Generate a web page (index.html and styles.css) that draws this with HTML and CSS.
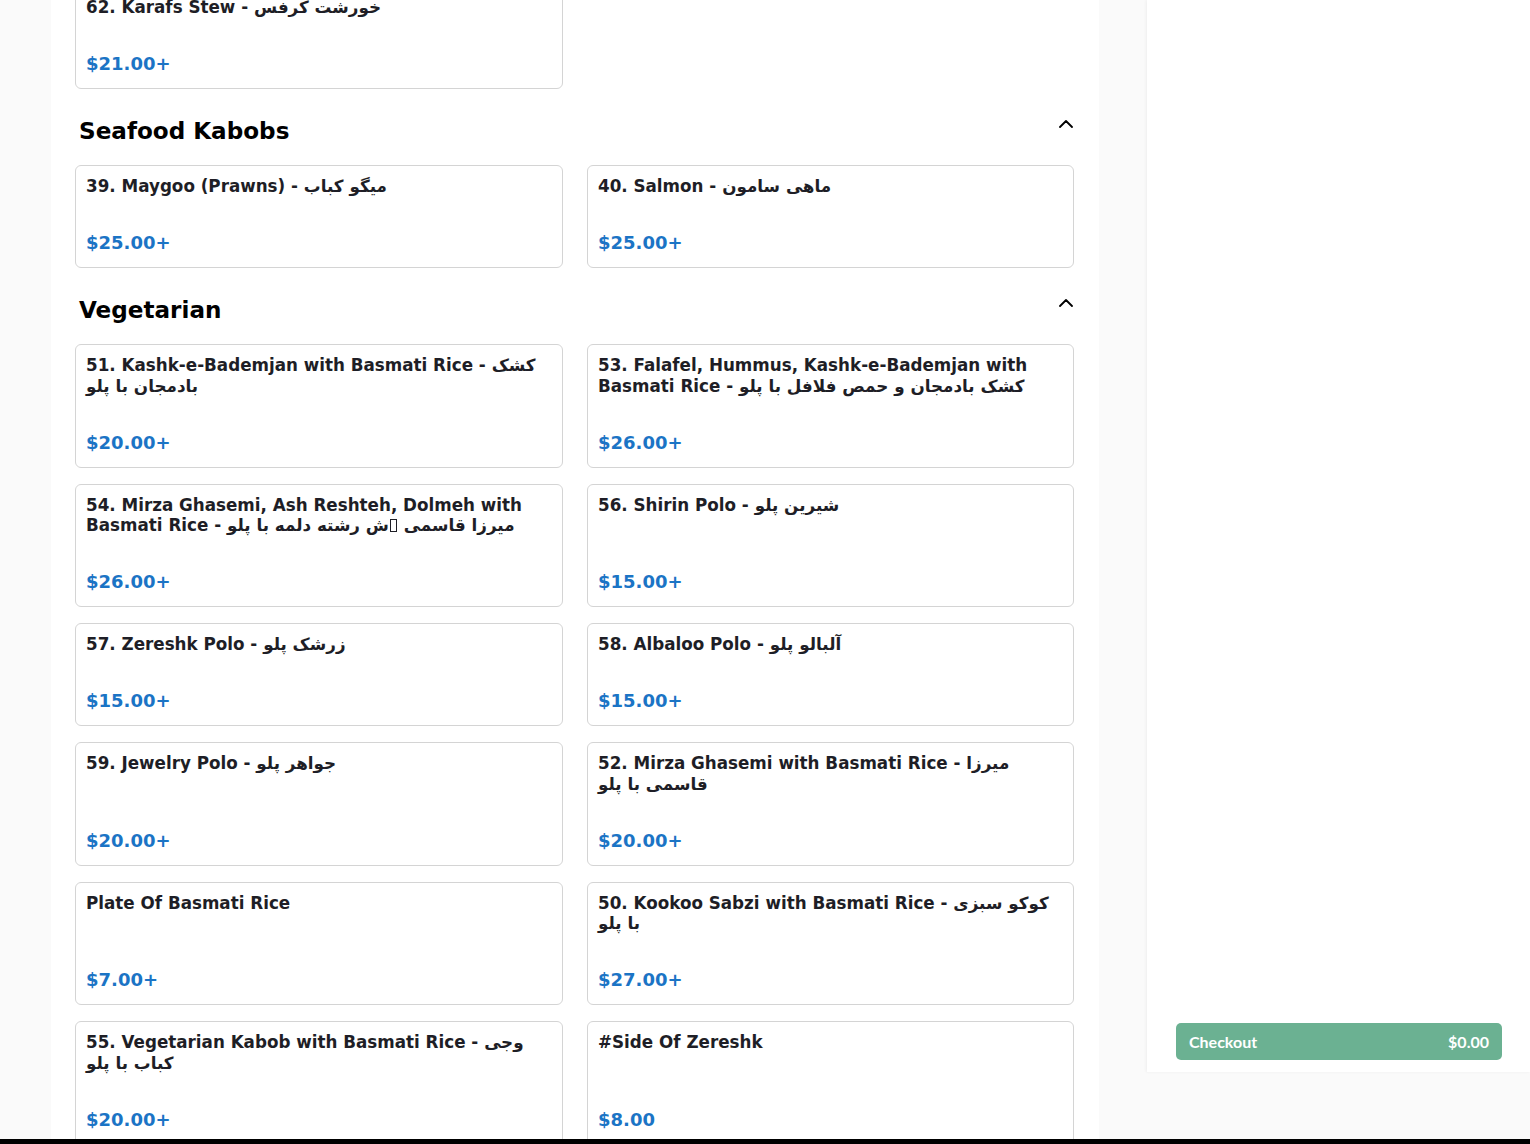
FILE: index.html
```html
<!DOCTYPE html>
<html lang="en">
<head>
<meta charset="utf-8">
<title>Menu</title>
<link rel="stylesheet" href="styles.css">
</head>
<body>
<div class="layout">
  <main class="menu">
    <div class="grid first">
      <div class="card"><div class="title">62. Karafs Stew - خورشت کرفس</div><div class="price">$21.00+</div></div>
    </div>

    <section class="section">
      <div class="section-head">
        <h2>Seafood Kabobs</h2>
        <svg class="chev" width="14" height="8" viewBox="0 0 14 8"><polyline points="1,7 7,1 13,7" fill="none" stroke="#000" stroke-width="1.8" stroke-linecap="round" stroke-linejoin="round"/></svg>
      </div>
      <div class="grid">
        <div class="card"><div class="title">39. Maygoo (Prawns) - میگو کباب</div><div class="price">$25.00+</div></div>
        <div class="card"><div class="title">40. Salmon - ماهی سامون</div><div class="price">$25.00+</div></div>
      </div>
    </section>

    <section class="section">
      <div class="section-head">
        <h2>Vegetarian</h2>
        <svg class="chev" width="14" height="8" viewBox="0 0 14 8"><polyline points="1,7 7,1 13,7" fill="none" stroke="#000" stroke-width="1.8" stroke-linecap="round" stroke-linejoin="round"/></svg>
      </div>
      <div class="grid">
        <div class="card"><div class="title">51. Kashk-e-Bademjan with Basmati Rice - کشک بادمجان با پلو</div><div class="price">$20.00+</div></div>
        <div class="card"><div class="title">53. Falafel, Hummus, Kashk-e-Bademjan with Basmati Rice - کشک بادمجان و حمص فلافل با پلو</div><div class="price">$26.00+</div></div>
        <div class="card"><div class="title">54. Mirza Ghasemi, Ash Reshteh, Dolmeh with Basmati Rice - میرزا قاسمی <span class="tofu"></span>ش رشته دلمه با پلو</div><div class="price">$26.00+</div></div>
        <div class="card"><div class="title">56. Shirin Polo - شیرین پلو</div><div class="price">$15.00+</div></div>
        <div class="card"><div class="title">57. Zereshk Polo - زرشک پلو</div><div class="price">$15.00+</div></div>
        <div class="card"><div class="title">58. Albaloo Polo - آلبالو پلو</div><div class="price">$15.00+</div></div>
        <div class="card"><div class="title">59. Jewelry Polo - جواهر پلو</div><div class="price">$20.00+</div></div>
        <div class="card"><div class="title">52. Mirza Ghasemi with Basmati Rice - میرزا قاسمی با پلو</div><div class="price">$20.00+</div></div>
        <div class="card"><div class="title">Plate Of Basmati Rice</div><div class="price">$7.00+</div></div>
        <div class="card"><div class="title">50. Kookoo Sabzi with Basmati Rice - کوکو سبزی با پلو</div><div class="price">$27.00+</div></div>
        <div class="card"><div class="title">55. Vegetarian Kabob with Basmati Rice - وجی کباب با پلو</div><div class="price">$20.00+</div></div>
        <div class="card"><div class="title">#Side Of Zereshk</div><div class="price">$8.00</div></div>
      </div>
    </section>
  </main>

  <aside class="cart">
    <button class="checkout"><span>Checkout</span><span>$0.00</span></button>
  </aside>
</div>
<div class="bottom-bar"></div>
</body>
</html>
```

FILE: styles.css
```css
html, body {
  margin: 0;
  padding: 0;
  overflow: hidden;
  height: 100%;
}
body {
  background: #fafafa;
  font-family: "DejaVu Sans", sans-serif;
  color: #1e1e26;
}
.layout {
  display: flex;
  align-items: flex-start;
  gap: 48px;
  padding-left: 51px;
}
.menu {
  width: 1048px;
  flex: none;
  background: #fff;
  padding: 0 25px 40px 24px;
  box-sizing: border-box;
  min-height: 1300px;
}
.grid {
  display: grid;
  grid-template-columns: 488px 487px;
  column-gap: 24px;
  row-gap: 16px;
}
.grid.first {
  margin-top: -14px;
}
.card {
  border: 1px solid #d4d4d4;
  border-radius: 6px;
  padding: 10px;
  display: flex;
  flex-direction: column;
  background: #fff;
}
.title {
  font-weight: 700;
  font-size: 16.75px;
  line-height: 20.5px;
  margin-bottom: 32.5px;
  color: #1e1e26;
}
.tofu {
  display: inline-block;
  width: 7px;
  height: 13px;
  border: 1px solid #1e1e26;
  box-sizing: border-box;
  vertical-align: -1px;
  margin: 0 1px;
}
.price {
  font-weight: 700;
  font-size: 18px;
  line-height: 28px;
  color: #1b74c5;
  margin-top: auto;
}
.section-head {
  display: flex;
  justify-content: space-between;
  align-items: flex-start;
  margin: 28px 1px 20px 4px;
}
.section-head h2 {
  margin: 0;
  font-size: 23.1px;
  line-height: 28px;
  font-weight: 700;
  color: #000;
}
.chev {
  margin-top: 3px;
  display: block;
}
.cart {
  width: 383px;
  flex: none;
  height: 1072px;
  background: #fff;
  box-shadow: -1px 0 3px rgba(0, 0, 0, 0.05);
  display: flex;
  flex-direction: column;
  justify-content: flex-end;
  padding: 0 28px 12px 29px;
  box-sizing: border-box;
}
.checkout {
  display: flex;
  justify-content: space-between;
  align-items: center;
  height: 37px;
  border: none;
  border-radius: 5px;
  background: #6bb192;
  color: #fff;
  font-family: "Lato", "Open Sans", sans-serif;
  font-weight: 700;
  font-size: 16px;
  padding: 0 13px;
  width: 100%;
}
.bottom-bar {
  position: fixed;
  left: 0;
  right: 0;
  bottom: 0;
  height: 5px;
  background: #000;
}
```
